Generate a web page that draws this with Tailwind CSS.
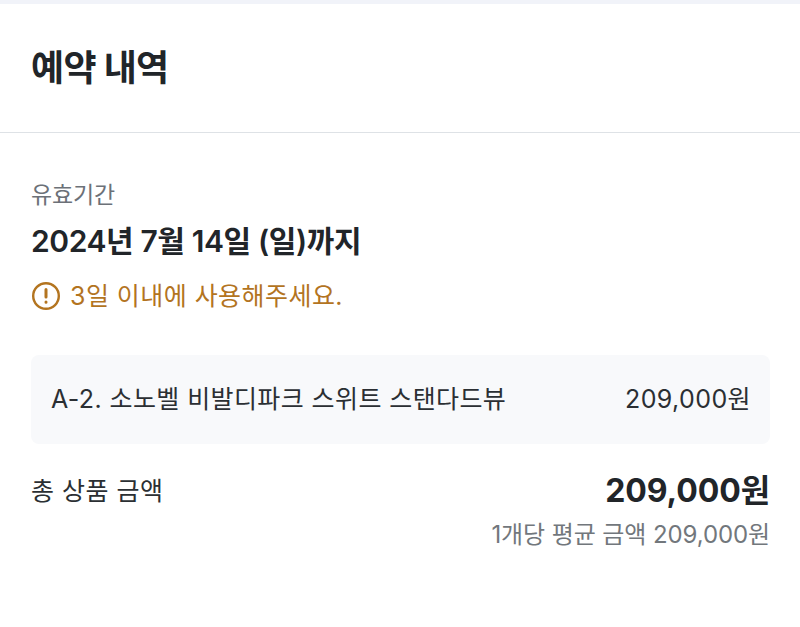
<!DOCTYPE html>
<html lang="ko">
  <head>
    <meta charset="UTF-8" />
    <title>예약 내역</title>
    <script src="https://cdn.jsdelivr.net/npm/@tailwindcss/browser@4"></script>
  </head>
  <body class="bg-white text-[#212529] font-['Inter','Noto_Sans_CJK_KR',sans-serif] h-[627px] overflow-hidden">
    <div class="h-1 bg-[#f1f3f9]"></div>
    <header class="h-[129px] flex items-center pl-[31px] pr-8 border-b border-[#dee2e6]">
      <h1 class="text-[36px] font-bold tracking-[-0.7px] leading-none">예약 내역</h1>
    </header>
    <main class="pl-[31px] pr-[30px] pt-[47px]">
      <p class="text-[23px] leading-[30px] text-[#6c7178] tracking-[-0.2px]">유효기간</p>
      <p class="mt-[11px] text-[30px] leading-[40px] font-semibold tracking-[-0.4px]">2024년 7월 14일 (일)까지</p>
      <div class="mt-[18px] flex items-center gap-[9px] text-[#b3741f]">
        <svg class="w-[30px] h-[30px]" viewBox="0 0 30 30" fill="none" stroke="currentColor" stroke-width="2.4" stroke-linecap="round">
          <circle cx="15" cy="15" r="12.8"></circle>
          <path stroke-width="3" d="M15 8.5v7.5M15 21v.2"></path>
        </svg>
        <span class="text-[25px] leading-[34px] tracking-[0.45px]">3일 이내에 사용해주세요.</span>
      </div>
      <div class="mt-[42px] h-[89px] rounded-lg bg-[#f8f9fb] flex justify-between items-center pl-5 pr-[19px] pt-px text-[25px] tracking-[0.4px] text-[#2b2f33]">
        <span>A-2. 소노벨 비발디파크 스위트 스탠다드뷰</span>
        <span>209,000원</span>
      </div>
      <div class="mt-[25px] flex justify-between items-start">
        <span class="text-[25px] leading-[44px] tracking-[0.5px] text-[#2b2f33]">총 상품 금액</span>
        <div class="text-right">
          <p class="text-[32px] leading-[44px] font-bold tracking-[-0.1px]">209,000원</p>
          <p class="mt-[5px] text-[24px] leading-[34px] tracking-[-0.1px] text-[#72777c]">1개당 평균 금액 209,000원</p>
        </div>
      </div>
    </main>
  </body>
</html>
